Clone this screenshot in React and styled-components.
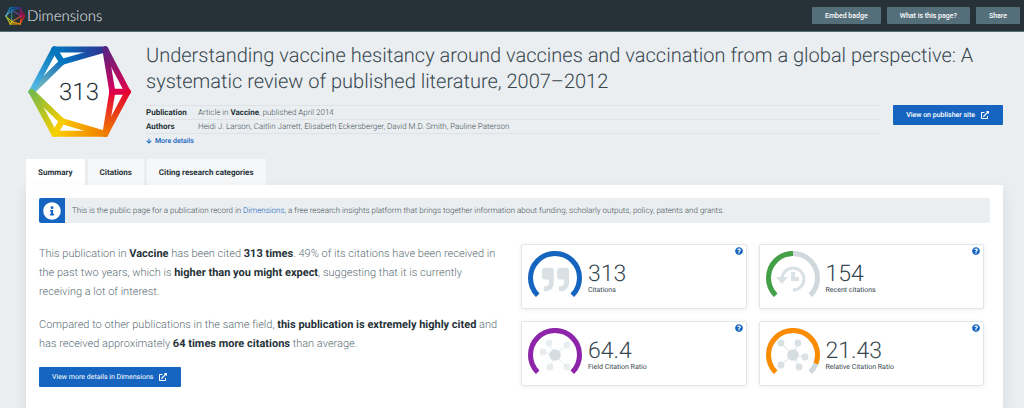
import styled, { createGlobalStyle } from "styled-components";
import { FaArrowDown, FaExternalLinkAlt, FaInfoCircle, FaQuestionCircle, FaQuoteRight } from "react-icons/fa";

const GlobalStyle = createGlobalStyle`
    * {
        box-sizing: border-box;
    }

    body {
        margin: 0;
        background-color: #eaeef1;
        color: #455056;
        font-family: Roboto, "Liberation Sans", sans-serif;
        font-size: 7px;
        text-rendering: geometricPrecision;
    }

    h1, p {
        margin: 0;
    }

    b {
        color: #263238;
        font-weight: 700;
    }

    a {
        color: #1565c0;
        text-decoration: none;
    }

    svg {
        display: block;
        flex-shrink: 0;
    }
`

const Page = styled.div`
    display: flex;
    flex-direction: column;
    min-height: 100vh;
`

const Header = styled.header`
    display: flex;
    align-items: center;
    justify-content: space-between;
    height: 32px;
    padding: 0 4px 0 5px;
    background-color: #263238;
    border-bottom: 1px solid #546e7a;
`

const Brand = styled.a`
    display: flex;
    align-items: center;
    gap: 2px;
    color: #eceff1;
    font-family: Lato, sans-serif;
    font-size: 15px;
    font-weight: 300;
`

const HeaderActions = styled.div`
    display: flex;
    gap: 6px;

    button {
        height: 17px;
        padding: 0 13px;
        border: 0;
        border-radius: 1px;
        background-color: #546e7a;
        color: #fff;
        font: 500 7px Roboto, sans-serif;
    }
`

const Hero = styled.section`
    display: flex;
    gap: 15px;
    padding: 10px 21px 0 27px;
`

const Badge = styled.div`
    display: grid;
    place-items: center;
    width: 104px;
    height: 100px;
    flex-shrink: 0;

    > * {
        grid-area: 1 / 1;
    }

    span {
        color: #263238;
        font-size: 24px;
        font-weight: 300;
    }
`

const HeroBody = styled.div`
    flex: 1;

    h1 {
        color: #37474f;
        font-size: 20px;
        font-weight: 300;
        line-height: 26px;
    }
`

const Details = styled.div`
    display: flex;
    align-items: flex-start;
    gap: 13px;
    margin-top: 11px;
`

const DetailsBody = styled.div`
    flex: 1;

    table {
        width: 100%;
        border-collapse: collapse;
        border-bottom: 1px solid #dfe3e6;
        font-size: 8px;
        font-weight: 300;
    }

    th, td {
        height: 14px;
        padding: 0;
        border-top: 1px solid #dfe3e6;
        text-align: left;
        line-height: 13px;
    }

    th {
        width: 52px;
        color: #263238;
        font-weight: 700;
    }
`

const MoreLink = styled.a`
    display: flex;
    align-items: center;
    gap: 3px;
    margin-top: 3px;
    font-weight: 500;
`

const LinkButton = styled.a`
    display: flex;
    align-items: center;
    gap: 6px;
    width: fit-content;
    height: 20px;
    padding: 0 14px 0 13px;
    border-radius: 1px;
    background-color: #1565c0;
    color: #fff;
    font-weight: ${({ $strong }) => $strong ? 500 : 400};
`

const Tabs = styled.nav`
    display: flex;
    gap: 3px;
    padding: 0 21px 0 26px;
    margin-top: 14px;
`

const Tab = styled.a`
    display: flex;
    align-items: center;
    height: 26px;
    padding: 0 12px;
    background-color: ${({ $active }) => $active ? "#fff" : "#f5f7f8"};
    color: #263238;
    font-size: 8px;
    font-weight: 700;
`

const Panel = styled.main`
    flex: 1;
    margin: 0 21px 0 26px;
    padding: 13px;
    background-color: #fff;
    box-shadow: 0 6px 12px rgba(38, 50, 56, 0.1);
`

const Notice = styled.div`
    display: flex;
    align-items: center;
    gap: 7px;
    height: 25px;
    border-radius: 2px;
    overflow: hidden;
    background-color: #eaeef1;
    font-size: 8px;
    font-weight: 300;
`

const NoticeIcon = styled.div`
    display: grid;
    place-items: center;
    width: 26px;
    height: 100%;
    background-color: #1565c0;
    color: #fff;
`

const Columns = styled.div`
    display: grid;
    grid-template-columns: 1fr 1fr;
    align-items: start;
    gap: 19px;
    padding: 21px 6px 0 0;
`

const Story = styled.div`
    padding-right: 2px;
    color: #607078;
    font-size: 11px;
    font-weight: 300;
    line-height: 19px;

    p {
        margin-bottom: 14px;
    }

    a {
        font-size: 7px;
    }
`

const Cards = styled.div`
    display: grid;
    grid-template-columns: 1fr 1fr;
    gap: 12px;
`

const Card = styled.article`
    display: flex;
    gap: 6px;
    height: 65px;
    padding: 6px 3px 0 6px;
    border: 1px solid #e1e6e9;
    border-radius: 2px;
    box-shadow: 0 1px 4px rgba(38, 50, 56, 0.08);
`

const Figure = styled.div`
    flex: 1;
    padding-top: 11px;
    color: #37474f;

    strong {
        display: block;
        font-size: 23px;
        font-weight: 300;
        line-height: 24px;
    }
`

const Help = styled.button`
    align-self: flex-start;
    margin-top: -4px;
    padding: 0;
    border: 0;
    background: none;
    color: #1565c0;
`

// edges of the gem, with the colour at each end
const EDGES = [
    [[35, 156], [126, 66], "#8cc9c0", "#0f6fba"],
    [[126, 66], [256, 29], "#0078c1", "#2e3192"],
    [[256, 29], [277, 156], "#52257f", "#dc005c"],
    [[277, 156], [256, 282], "#e5003c", "#f07a00"],
    [[256, 282], [126, 244], "#f07a00", "#fcc800"],
    [[126, 244], [35, 156], "#f2cc00", "#7dbb42"],
    [[126, 66], [103, 29], "#0078c1", "#0072b8"],
    [[277, 156], [323, 156], "#dc0050", "#e2003f"],
    [[126, 244], [103, 282], "#f5cc00", "#fccf00"],
    [[35, 156], [103, 29], "#5bbfe8", "#0072b8"],
    [[103, 29], [256, 29], "#0078c1", "#2e3192"],
    [[256, 29], [323, 156], "#5b2482", "#e5004a"],
    [[323, 156], [256, 282], "#e30030", "#f07a00"],
    [[256, 282], [103, 282], "#ef7d00", "#fccf00"],
    [[103, 282], [35, 156], "#f5d000", "#76b84a"],
];

// the face across the middle, only in the small logo
const FACE = [
    [[126, 66], [277, 156], "#1c6fb4", "#c4146a"],
    [[277, 156], [126, 244], "#d0304a", "#e8a020"],
    [[126, 244], [126, 66], "#4cae6c", "#2a80c0"],
];

const Gem = ({ id, size, weight, fill, edges }) => (
    <svg width={size} height={size * 0.9} viewBox="21 16 312 280" fill="none" strokeLinecap="round" aria-hidden="true">
        <polygon points="35,156 103,29 256,29 323,156 256,282 103,282" fill={fill} />
        {edges.map(([a, b, from, to], i) => (
            <g key={i}>
                <linearGradient id={id + i} gradientUnits="userSpaceOnUse" x1={a[0]} y1={a[1]} x2={b[0]} y2={b[1]}>
                    <stop stopColor={from} />
                    <stop offset="1" stopColor={to} />
                </linearGradient>
                <path d={`M${a} L${b}`} stroke={`url(#${id + i})`} strokeWidth={weight} />
            </g>
        ))}
    </svg>
);

const History = () => (
    <g fill="none" stroke="#dae1e5">
        <path d="M16 28A11 11 0 1 1 27 39" strokeWidth="3" />
        <path d="M27 21V28H33" strokeWidth="4" />
        <path d="M10 26H22L16 33Z" fill="#dae1e5" stroke="none" />
    </g>
);

const Network = ({ nodes, color }) => (
    <g fill={color} stroke={color}>
        {nodes.map(([x, y]) => (
            <g key={`${x},${y}`}>
                <path d={`M27 27L${x} ${y}`} />
                <circle cx={x} cy={y} r="3.4" stroke="none" />
            </g>
        ))}
        <circle cx="27" cy="27" r="5.8" fill="#d5dde1" stroke="none" />
    </g>
);

const Gauge = ({ value, color, children }) => (
    <svg width="54" height="54" viewBox="0 0 54 54" fill="none" aria-hidden="true">
        <path d="M9.7 44.3A24.5 24.5 0 1 1 44.3 44.3" pathLength="100" stroke="#cfd8dc" strokeWidth="5" />
        <path d="M9.7 44.3A24.5 24.5 0 1 1 44.3 44.3" pathLength="100" stroke={color} strokeWidth="5" strokeDasharray={`${value} 101`} />
        {children}
    </svg>
);

const METRICS = [
    {
        name: "Citations", figure: "313", value: 100, color: "#1565c0",
        icon: <FaQuoteRight x="14" y="15" size="27" color="#dae1e5" />,
    },
    { name: "Recent citations", figure: "154", value: 50, color: "#43a047", icon: <History /> },
    {
        name: "Field Citation Ratio", figure: "64.4", value: 100, color: "#8e24aa",
        icon: <Network color="#e8edef" nodes={[[21, 15], [39, 17], [15, 24], [22, 39], [39, 39]]} />,
    },
    {
        name: "Relative Citation Ratio", figure: "21.43", value: 91, color: "#fb8c00",
        icon: <Network color="#dae1e5" nodes={[[15, 15], [32, 15], [39, 29], [33, 39], [15, 37]]} />,
    },
];

const MetricCard = ({ metric }) => {

    const { name, figure, value, color, icon } = metric;

    return (
        <Card>
            <Gauge value={value} color={color}>{icon}</Gauge>
            <Figure>
                <strong>{figure}</strong>
                {name}
            </Figure>
            <Help aria-label={`About ${name}`}><FaQuestionCircle size={8} /></Help>
        </Card>
    );
};

const App = () => (
    <Page>
        <GlobalStyle />
        <Header>
            <Brand href="#">
                <Gem id="logo" size={20} weight={16} fill="none" edges={[...FACE, ...EDGES]} />
                Dimensions
            </Brand>
            <HeaderActions>
                <button>Embed badge</button>
                <button>What is this page?</button>
                <button>Share</button>
            </HeaderActions>
        </Header>
        <Hero>
            <Badge>
                <Gem id="badge" size={104} weight={18} fill="#fff" edges={EDGES} />
                <span>313</span>
            </Badge>
            <HeroBody>
                <h1>Understanding vaccine hesitancy around vaccines and vaccination from a global perspective: A systematic review of published literature, 2007–2012</h1>
                <Details>
                    <DetailsBody>
                        <table>
                            <tbody>
                                <tr>
                                    <th scope="row">Publication</th>
                                    <td>Article in <b>Vaccine</b>, published April 2014</td>
                                </tr>
                                <tr>
                                    <th scope="row">Authors</th>
                                    <td>Heidi J. Larson, Caitlin Jarrett, Elisabeth Eckersberger, David M.D. Smith, Pauline Paterson</td>
                                </tr>
                            </tbody>
                        </table>
                        <MoreLink href="#"><FaArrowDown size={6} />More details</MoreLink>
                    </DetailsBody>
                    <LinkButton href="#" $strong>View on publisher site <FaExternalLinkAlt size={8} /></LinkButton>
                </Details>
            </HeroBody>
        </Hero>
        <Tabs>
            <Tab href="#" $active>Summary</Tab>
            <Tab href="#">Citations</Tab>
            <Tab href="#">Citing research categories</Tab>
        </Tabs>
        <Panel>
            <Notice>
                <NoticeIcon><FaInfoCircle size={18} /></NoticeIcon>
                <p>This is the public page for a publication record in <a href="#">Dimensions</a>, a free research insights platform that brings together information about funding, scholarly outputs, policy, patents and grants.</p>
            </Notice>
            <Columns>
                <Story>
                    <p>This publication in <b>Vaccine</b> has been cited <b>313 times</b>. 49% of its citations have been received in the past two years, which is <b>higher than you might expect</b>, suggesting that it is currently receiving a lot of interest.</p>
                    <p>Compared to other publications in the same field, <b>this publication is extremely highly cited</b> and has received approximately <b>64 times more citations</b> than average.</p>
                    <LinkButton href="#">View more details in Dimensions <FaExternalLinkAlt size={8} /></LinkButton>
                </Story>
                <Cards>
                    {METRICS.map((metric) => <MetricCard key={metric.name} metric={metric} />)}
                </Cards>
            </Columns>
        </Panel>
    </Page>
);
export default App;
